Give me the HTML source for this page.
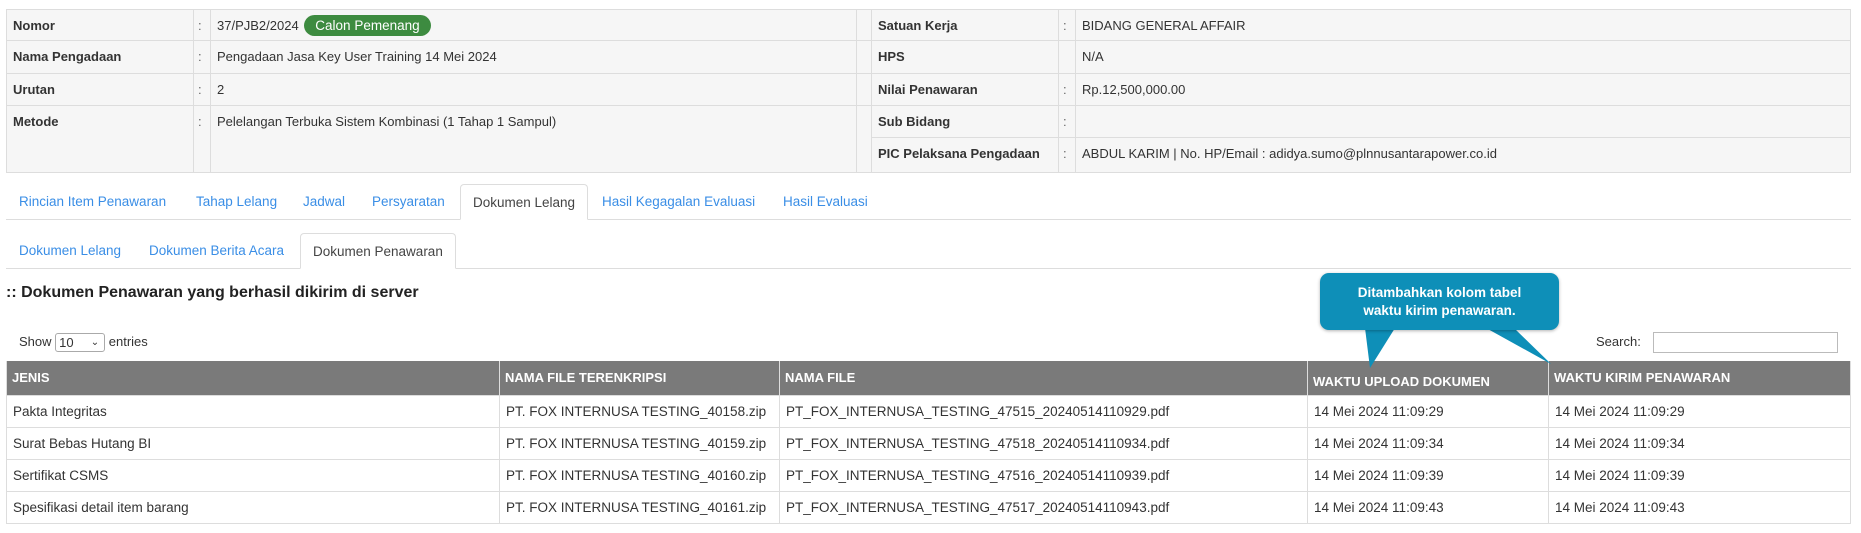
<!DOCTYPE html>
<html><head><meta charset="utf-8"><style>
*{box-sizing:border-box;margin:0;padding:0}
body{width:1861px;height:533px;background:#fff;font-family:"Liberation Sans",Arial,sans-serif;font-size:13px;color:#333;position:relative;overflow:hidden}
.info{position:absolute;left:6px;top:9px;width:1845px;border-collapse:collapse;table-layout:fixed;background:#f6f6f6}
.info td{border:1px solid #ddd;padding:0 6px;vertical-align:top;padding-top:8px;line-height:16px;white-space:nowrap}
.info td.l{font-weight:bold}
.info td.c{padding:8px 0 0 4px;color:#666}
.badge{display:inline-block;background:#3d8b40;color:#fff;border-radius:12px;padding:2px 11px;line-height:17px;margin-left:2px;font-size:13.5px}
.tabs{position:absolute;left:6px;width:1845px;border-bottom:1px solid #ddd;font-size:13.5px}
.tabs span{position:absolute;color:#3a8ee6;white-space:nowrap}
.tabs .act{color:#444;border:1px solid #ddd;border-bottom:1px solid #fff;background:#fff;border-radius:4px 4px 0 0}
h3{position:absolute;left:6px;top:284px;font-size:16px;font-weight:bold;color:#222;white-space:nowrap}
.dt{position:absolute;left:6px;top:361px;width:1845px;border-collapse:collapse;table-layout:fixed}
.dt th{background:#7a7a7a;color:#fff;text-align:left;font-size:13px;height:34px;padding:0 5px;border:1px solid #ddd;border-top:none;white-space:nowrap}
.dt td{height:32px;padding:0 6px;border:1px solid #ddd;white-space:nowrap;font-size:13.5px}
.balloon{position:absolute;left:1320px;top:273px;width:239px;height:57px;background:#0e8fb8;border-radius:9px;color:#fff;font-weight:bold;font-size:13.5px;text-align:center;line-height:18px;padding-top:11px;box-shadow:0 1px 3px rgba(0,0,0,.3)}
</style></head><body>
<table class="info">
<colgroup><col style="width:187px"><col style="width:17px"><col style="width:646px"><col style="width:15px"><col style="width:187px"><col style="width:17px"><col></colgroup>
<tr style="height:31px"><td class="l">Nomor</td><td class="c">:</td><td style="padding-top:5px">37/PJB2/2024 <span class="badge">Calon Pemenang</span></td><td></td><td class="l">Satuan Kerja</td><td class="c">:</td><td>BIDANG GENERAL AFFAIR</td></tr>
<tr style="height:33px"><td class="l">Nama Pengadaan</td><td class="c">:</td><td>Pengadaan Jasa Key User Training 14 Mei 2024</td><td></td><td class="l">HPS</td><td class="c"></td><td>N/A</td></tr>
<tr style="height:32px"><td class="l">Urutan</td><td class="c">:</td><td>2</td><td></td><td class="l">Nilai Penawaran</td><td class="c">:</td><td>Rp.12,500,000.00</td></tr>
<tr style="height:32px"><td class="l" rowspan="2">Metode</td><td class="c" rowspan="2">:</td><td rowspan="2">Pelelangan Terbuka Sistem Kombinasi (1 Tahap 1 Sampul)</td><td rowspan="2"></td><td class="l">Sub Bidang</td><td class="c">:</td><td></td></tr>
<tr style="height:35px"><td class="l">PIC Pelaksana Pengadaan</td><td class="c">:</td><td>ABDUL KARIM | No. HP/Email : adidya.sumo@plnnusantarapower.co.id</td></tr>
</table>

<div class="tabs" style="top:184px;height:36px">
<span style="left:13px;top:10px">Rincian Item Penawaran</span>
<span style="left:190px;top:10px">Tahap Lelang</span>
<span style="left:297px;top:10px">Jadwal</span>
<span style="left:366px;top:10px">Persyaratan</span>
<span class="act" style="left:454px;top:0;height:36px;padding:10px 12px 0">Dokumen Lelang</span>
<span style="left:596px;top:10px">Hasil Kegagalan Evaluasi</span>
<span style="left:777px;top:10px">Hasil Evaluasi</span>
</div>
<div class="tabs" style="top:233px;height:36px">
<span style="left:13px;top:10px">Dokumen Lelang</span>
<span style="left:143px;top:10px">Dokumen Berita Acara</span>
<span class="act" style="left:294px;top:0;height:36px;padding:10px 12px 0">Dokumen Penawaran</span>
</div>

<h3>:: Dokumen Penawaran yang berhasil dikirim di server</h3>

<div style="position:absolute;left:19px;top:333px;line-height:18px;white-space:nowrap">Show <span style="display:inline-block;width:50px;height:19px;border:1px solid #aaa;border-radius:3px;vertical-align:middle;font-size:13px;padding-left:3px;line-height:17px;position:relative">10<span style="position:absolute;right:5px;top:0;font-size:10px">&#8964;</span></span> entries</div>
<div style="position:absolute;left:1596px;top:333px;line-height:18px">Search:</div>
<div style="position:absolute;left:1653px;top:332px;width:185px;height:21px;border:1px solid #bbb"></div>

<table class="dt">
<colgroup><col style="width:493px"><col style="width:280px"><col style="width:528px"><col style="width:241px"><col></colgroup>
<tr><th>JENIS</th><th>NAMA FILE TERENKRIPSI</th><th>NAMA FILE</th><th style="padding-top:8px">WAKTU UPLOAD DOKUMEN</th><th>WAKTU KIRIM PENAWARAN</th></tr>
<tr><td>Pakta Integritas</td><td>PT. FOX INTERNUSA TESTING_40158.zip</td><td>PT_FOX_INTERNUSA_TESTING_47515_20240514110929.pdf</td><td>14 Mei 2024 11:09:29</td><td>14 Mei 2024 11:09:29</td></tr>
<tr><td>Surat Bebas Hutang BI</td><td>PT. FOX INTERNUSA TESTING_40159.zip</td><td>PT_FOX_INTERNUSA_TESTING_47518_20240514110934.pdf</td><td>14 Mei 2024 11:09:34</td><td>14 Mei 2024 11:09:34</td></tr>
<tr><td>Sertifikat CSMS</td><td>PT. FOX INTERNUSA TESTING_40160.zip</td><td>PT_FOX_INTERNUSA_TESTING_47516_20240514110939.pdf</td><td>14 Mei 2024 11:09:39</td><td>14 Mei 2024 11:09:39</td></tr>
<tr><td>Spesifikasi detail item barang</td><td>PT. FOX INTERNUSA TESTING_40161.zip</td><td>PT_FOX_INTERNUSA_TESTING_47517_20240514110943.pdf</td><td>14 Mei 2024 11:09:43</td><td>14 Mei 2024 11:09:43</td></tr>
</table>

<svg style="position:absolute;left:0;top:0" width="1861" height="533"><polygon points="1365,328 1395,328 1370,368" fill="#0e8fb8"/><polygon points="1486,328 1514,328 1551,364" fill="#0e8fb8"/></svg>
<div class="balloon">Ditambahkan kolom tabel<br>waktu kirim penawaran.</div>
</body></html>
